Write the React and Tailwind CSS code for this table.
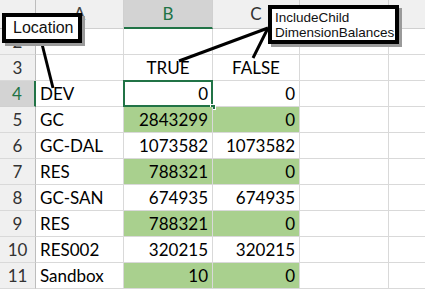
import React from 'react';

const rows = [
  { n: 2, a: '', b: '', c: '' },
  { n: 3, a: '', b: 'TRUE', c: 'FALSE', head: true },
  { n: 4, a: 'DEV', b: '0', c: '0', active: true },
  { n: 5, a: 'GC', b: '2843299', c: '0', green: true },
  { n: 6, a: 'GC-DAL', b: '1073582', c: '1073582' },
  { n: 7, a: 'RES', b: '788321', c: '0', green: true },
  { n: 8, a: 'GC-SAN', b: '674935', c: '674935' },
  { n: 9, a: 'RES', b: '788321', c: '0', green: true },
  { n: 10, a: 'RES002', b: '320215', c: '320215' },
  { n: 11, a: 'Sandbox', b: '10', c: '0', green: true },
];

const cell = 'h-[26px] border-r border-b border-[#d9d9d9] flex items-center text-[17px] text-black leading-none';

const Sheet = () => {
  return (
    <div className="grid grid-cols-[36px_88px_89px_87px_89px_1fr] bg-white" style={{ fontFamily: 'Lato, "Open Sans", sans-serif' }}>
      {/* column headers */}
      <div className="h-[29px] bg-[#f0f0f0] border-r border-b border-[#bdbdbd] relative">
        <div className="absolute right-[3px] bottom-[3px] w-0 h-0 border-l-[9px] border-l-transparent border-b-[9px] border-b-[#b8b8b8]" />
      </div>
      <div className="h-[29px] bg-[#f0f0f0] border-r border-b border-[#d0d0d0] flex items-end justify-center pb-[2px] text-[17px] text-[#444]">A</div>
      <div className="h-[29px] bg-[#d3d3d3] border-r border-b-2 border-r-[#d0d0d0] border-b-[#217346] flex items-end justify-center pb-[1px] text-[17px] text-[#217346]">B</div>
      <div className="h-[29px] bg-[#f0f0f0] border-r border-b border-[#d0d0d0] flex items-end justify-center pb-[2px] text-[17px] text-[#333]">C</div>
      <div className="h-[29px] bg-[#f0f0f0] border-r border-b border-[#d0d0d0]" />
      <div className="h-[29px] bg-[#f0f0f0] border-b border-[#d0d0d0]" />

      {rows.map((r) => (
        <React.Fragment key={r.n}>
          <div
            className={`h-[26px] border-b flex items-center justify-center text-[17px] ${
              r.active
                ? 'bg-[#d3d3d3] text-[#217346] border-r-2 border-r-[#217346] border-b-[#d0d0d0]'
                : 'bg-[#f0f0f0] text-[#333] border-r border-r-[#bdbdbd] border-b-[#d9d9d9]'
            }`}
          >
            {r.n}
          </div>
          <div className={`${cell} pl-[4px]`}>{r.a}</div>
          <div
            className={`${cell} relative ${r.head ? 'justify-center' : 'justify-end pr-[4px]'} ${
              r.green ? 'bg-[#a9d08e]' : ''
            }`}
          >
            {r.b}
            {r.active && (
              <>
                <div className="absolute -left-px -top-px -right-px -bottom-px border-2 border-[#217346]" />
                <div className="absolute -right-[4px] -bottom-[4px] w-[6px] h-[6px] bg-[#217346] border border-white" />
              </>
            )}
          </div>
          <div
            className={`${cell} ${r.head ? 'justify-center' : 'justify-end pr-[4px]'} ${
              r.green ? 'bg-[#a9d08e]' : ''
            }`}
          >
            {r.c}
          </div>
          <div className={cell} />
          <div className="h-[26px] border-b border-[#d9d9d9]" />
        </React.Fragment>
      ))}
    </div>
  );
};

const Callouts = () => (
  <>
    <svg className="absolute inset-0 pointer-events-none" width="425" height="292">
      <line x1="42" y1="44" x2="53" y2="88" stroke="#000" strokeWidth="3" />
      <line x1="268" y1="28" x2="179" y2="61" stroke="#000" strokeWidth="3" />
      <line x1="268" y1="28" x2="253" y2="58" stroke="#000" strokeWidth="3" />
    </svg>

    <div className="absolute left-[2px] top-[13px] w-[80px] h-[30px] bg-white border-[4px] border-black shadow-[3px_3px_0_#9a9a9a] flex items-center pl-[7px] text-[16px] text-[#111]" style={{ fontFamily: '"Liberation Sans", Arial, sans-serif' }}>
      Location
    </div>

    <div className="absolute left-[268px] top-[5px] w-[131px] h-[39px] bg-white border-[4px] border-black shadow-[3px_3px_0_#9a9a9a] flex flex-col justify-center pl-[3px] text-[13.5px] leading-[15px] text-[#111]" style={{ fontFamily: '"Liberation Sans", Arial, sans-serif' }}>
      <span>IncludeChild</span>
      <span>DimensionBalances</span>
    </div>
  </>
);

export default function App() {
  return (
    <div className="relative w-[425px] h-[292px] overflow-hidden bg-white">
      <Sheet />
      <Callouts />
    </div>
  );
}
